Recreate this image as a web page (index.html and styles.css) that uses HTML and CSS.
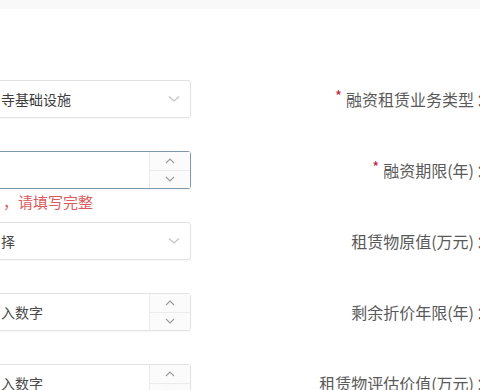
FILE: index.html
```html
<!DOCTYPE html>
<html lang="zh-CN">
<head>
<meta charset="utf-8">
<link rel="stylesheet" href="styles.css">
</head>
<body>
<div class="topbar"></div>
<form class="form">
  <div class="row">
    <div class="field">
      <div class="box select">
        <span class="value">寺基础设施</span>
        <svg class="chev" width="12" height="8" viewBox="0 0 12 8"><path d="M1 1.5 L6 6 L11 1.5" fill="none" stroke="#c4c4c4" stroke-width="1.3"/></svg>
      </div>
    </div>
    <label class="label"><span class="req">*</span>融资租赁业务类型<span class="colon">：</span></label>
  </div>
  <div class="row">
    <div class="field">
      <div class="box number error">
        <span class="value"></span>
        <div class="spin">
          <div class="btn"><svg width="10" height="6" viewBox="0 0 10 6"><path d="M1 5 L5 1 L9 5" fill="none" stroke="#9a9a9a" stroke-width="1.1"/></svg></div>
          <div class="btn"><svg width="10" height="6" viewBox="0 0 10 6"><path d="M1 1 L5 5 L9 1" fill="none" stroke="#9a9a9a" stroke-width="1.1"/></svg></div>
        </div>
      </div>
      <div class="msg">，请填写完整</div>
    </div>
    <label class="label"><span class="req">*</span>融资期限(年)<span class="colon">：</span></label>
  </div>
  <div class="row">
    <div class="field">
      <div class="box select">
        <span class="value ph">择</span>
        <svg class="chev" width="12" height="8" viewBox="0 0 12 8"><path d="M1 1.5 L6 6 L11 1.5" fill="none" stroke="#c4c4c4" stroke-width="1.3"/></svg>
      </div>
    </div>
    <label class="label">租赁物原值(万元)<span class="colon">：</span></label>
  </div>
  <div class="row">
    <div class="field">
      <div class="box number">
        <span class="value ph">入数字</span>
        <div class="spin">
          <div class="btn"><svg width="10" height="6" viewBox="0 0 10 6"><path d="M1 5 L5 1 L9 5" fill="none" stroke="#9a9a9a" stroke-width="1.1"/></svg></div>
          <div class="btn"><svg width="10" height="6" viewBox="0 0 10 6"><path d="M1 1 L5 5 L9 1" fill="none" stroke="#9a9a9a" stroke-width="1.1"/></svg></div>
        </div>
      </div>
    </div>
    <label class="label">剩余折价年限(年)<span class="colon">：</span></label>
  </div>
  <div class="row">
    <div class="field">
      <div class="box number">
        <span class="value ph">入数字</span>
        <div class="spin">
          <div class="btn"><svg width="10" height="6" viewBox="0 0 10 6"><path d="M1 5 L5 1 L9 5" fill="none" stroke="#9a9a9a" stroke-width="1.1"/></svg></div>
          <div class="btn"><svg width="10" height="6" viewBox="0 0 10 6"><path d="M1 1 L5 5 L9 1" fill="none" stroke="#9a9a9a" stroke-width="1.1"/></svg></div>
        </div>
      </div>
    </div>
    <label class="label">租赁物评估价值(万元)<span class="colon">：</span></label>
  </div>
</form>
</body>
</html>
```

FILE: styles.css
```css
html, body {
  margin: 0;
  padding: 0;
  background: #ffffff;
  overflow: hidden;
  width: 480px;
  height: 390px;
}
body {
  font-family: "Noto Sans CJK SC", "Noto Sans", sans-serif;
  color: #555;
}
.topbar {
  height: 9px;
  background: #f9f9f9;
}
.form {
  padding-top: 71px;
  margin-left: -12px;
  margin-right: -12px;
}
.row {
  display: grid;
  grid-template-columns: 203px 1fr;
  height: 71px;
  align-items: start;
}
.field {
  display: flex;
  flex-direction: column;
}
.box {
  height: 38px;
  box-sizing: border-box;
  border: 1px solid #e2e2e2;
  border-radius: 3px;
  background: #fff;
  display: flex;
  align-items: center;
  box-shadow: 0 1px 2px rgba(0,0,0,0.04);
}
.box.error {
  border-color: #7d98ab;
}
.value {
  flex: 1;
  padding-left: 12px;
  font-size: 14px;
  color: #3c3c3c;
  white-space: nowrap;
}
.value.ph {
  color: #4a4a4a;
}
.chev {
  margin-right: 10px;
}
.spin {
  width: 40px;
  align-self: stretch;
  display: flex;
  flex-direction: column;
  border-left: 1px solid #ececec;
  background: #fbfbfb;
}
.btn {
  flex: 1;
  display: flex;
  align-items: center;
  justify-content: center;
}
.btn + .btn {
  border-top: 1px solid #ececec;
}
.msg {
  margin-top: 3px;
  padding-left: 15px;
  font-size: 15px;
  line-height: 20px;
  color: #dc5b5e;
}
.label {
  line-height: 38px;
  text-align: right;
  font-size: 16px;
  color: #5a5a5a;
  white-space: nowrap;
}
.colon {
  margin-left: 2px;
}
.req {
  color: #c21d3a;
  font-size: 15px;
  position: relative;
  top: -4px;
  margin-right: 4px;
}
```
